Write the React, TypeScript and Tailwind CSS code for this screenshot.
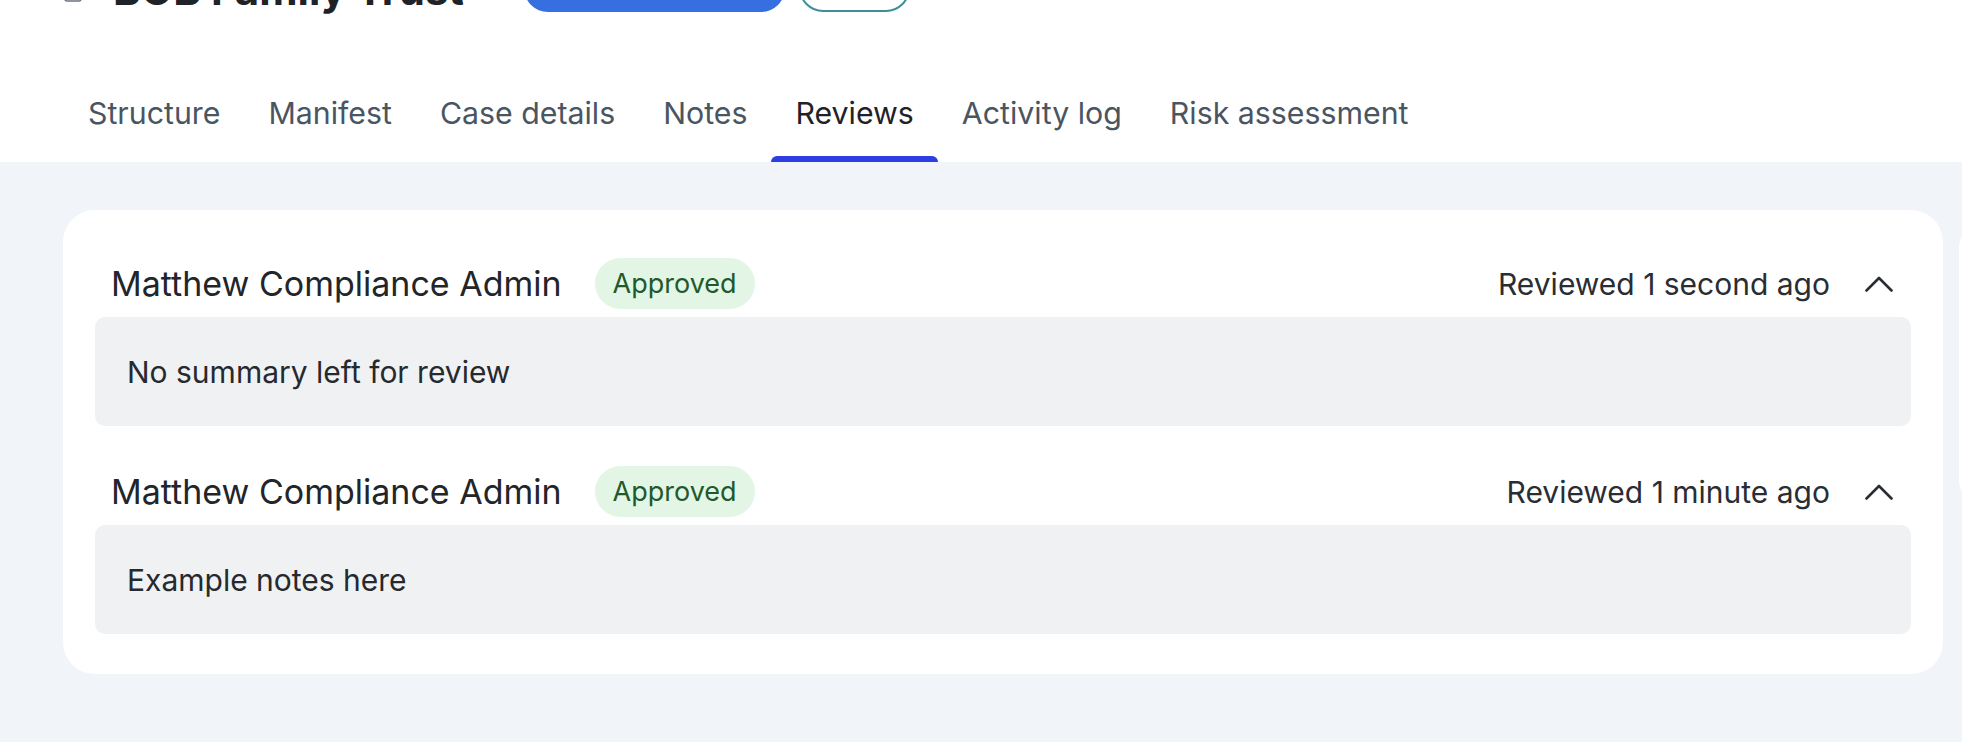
import React from "react";

const tabs = [
  "Structure",
  "Manifest",
  "Case details",
  "Notes",
  "Reviews",
  "Activity log",
  "Risk assessment",
];

const reviews = [
  {
    name: "Matthew Compliance Admin",
    status: "Approved",
    time: "Reviewed 1 second ago",
    text: "No summary left for review",
  },
  {
    name: "Matthew Compliance Admin",
    status: "Approved",
    time: "Reviewed 1 minute ago",
    text: "Example notes here",
  },
];

function ChevronUp() {
  return (
    <svg width="28" height="16" viewBox="0 0 28 16" fill="none" className="shrink-0">
      <polyline
        points="1.5,14.5 14,2 26.5,14.5"
        stroke="#2a2d33"
        strokeWidth="2.6"
        strokeLinecap="round"
        strokeLinejoin="round"
      />
    </svg>
  );
}

function Review({ r }: { r: (typeof reviews)[number] }) {
  return (
    <div className="flex flex-col gap-[8px]">
      <div className="flex items-center h-[51px] pl-[16px] pr-[18px]">
        <span className="text-[34px] font-normal text-[#222529] leading-none">{r.name}</span>
        <span className="ml-[33px] h-[51px] px-[18px] rounded-full bg-[#e3f5e5] text-[#22592b] text-[27px] leading-none flex items-center">
          {r.status}
        </span>
        <span className="ml-auto text-[30px] text-[#2a2d33] leading-none">{r.time}</span>
        <span className="ml-[35px] flex items-center">
          <ChevronUp />
        </span>
      </div>
      <div className="h-[109px] rounded-[10px] bg-[#f0f1f3] flex items-center px-[32px]">
        <span className="text-[30px] text-[#26292e] leading-none">{r.text}</span>
      </div>
    </div>
  );
}

export default function App() {
  return (
    <div className="w-[1962px] h-[742px] overflow-hidden bg-[#f1f4f9] flex flex-col font-['Inter',sans-serif]">
      {/* Header */}
      <div className="bg-white flex flex-col shrink-0">
        <div className="flex items-start h-[56px] -mt-[44px] pl-[64px]">
          <svg width="18" height="24" viewBox="0 0 18 24" fill="none" className="mt-[23px] shrink-0">
            <rect x="1" y="1" width="16" height="21" rx="2" stroke="#6b7280" strokeWidth="1.6" />
            <line x1="5" y1="16" x2="13" y2="16" stroke="#6b7280" strokeWidth="1.6" />
          </svg>
          <span className="ml-[31px] mt-[13px] text-[42px] font-bold leading-none text-[#1f2328] whitespace-nowrap">
            BOB Family Trust
          </span>
          <svg width="14" height="14" viewBox="0 0 14 14" fill="none" className="ml-[10px] mt-[32px] shrink-0">
            <polyline points="2,4 7,10 12,4" stroke="#6b7280" strokeWidth="1.8" strokeLinecap="round" />
          </svg>
          <div className="ml-[36px] w-[261px] h-[56px] rounded-[24px] bg-[#376fe0] text-white text-[22px] flex items-center justify-center shrink-0">
            Ready for approval
          </div>
          <div className="ml-[14px] w-[111px] h-[56px] rounded-[24px] border-2 border-[#3d8f98] text-[#3d8f98] text-[22px] flex items-center justify-center shrink-0">
            Copy
          </div>
        </div>
        <div className="flex pl-[64px] mt-[58px] h-[92px]">
          {tabs.map((t) => {
            const active = t === "Reviews";
            return (
              <div key={t} className="flex flex-col justify-between h-[92px] px-[24px]">
                <span
                  className={
                    "pt-[25px] text-[30.3px] leading-[36px] whitespace-nowrap " +
                    (active ? "text-[#1f2328]" : "text-[#4a5562]")
                  }
                >
                  {t}
                </span>
                <div
                  className={
                    "h-[6px] -mx-[24px] rounded-t-[6px] " + (active ? "bg-[#2d3fe3]" : "bg-transparent")
                  }
                />
              </div>
            );
          })}
        </div>
      </div>

      {/* Main */}
      <div className="flex gap-[16px] pl-[63px] pt-[48px]">
        <div className="w-[1880px] shrink-0 bg-white rounded-[32px] px-[32px] pt-[48px] pb-[40px] flex flex-col gap-[40px]">
          {reviews.map((r, i) => (
            <Review key={i} r={r} />
          ))}
        </div>
        <div className="w-[300px] shrink-0 bg-white rounded-[24px] mt-[14px] h-[280px]" />
      </div>
    </div>
  );
}
